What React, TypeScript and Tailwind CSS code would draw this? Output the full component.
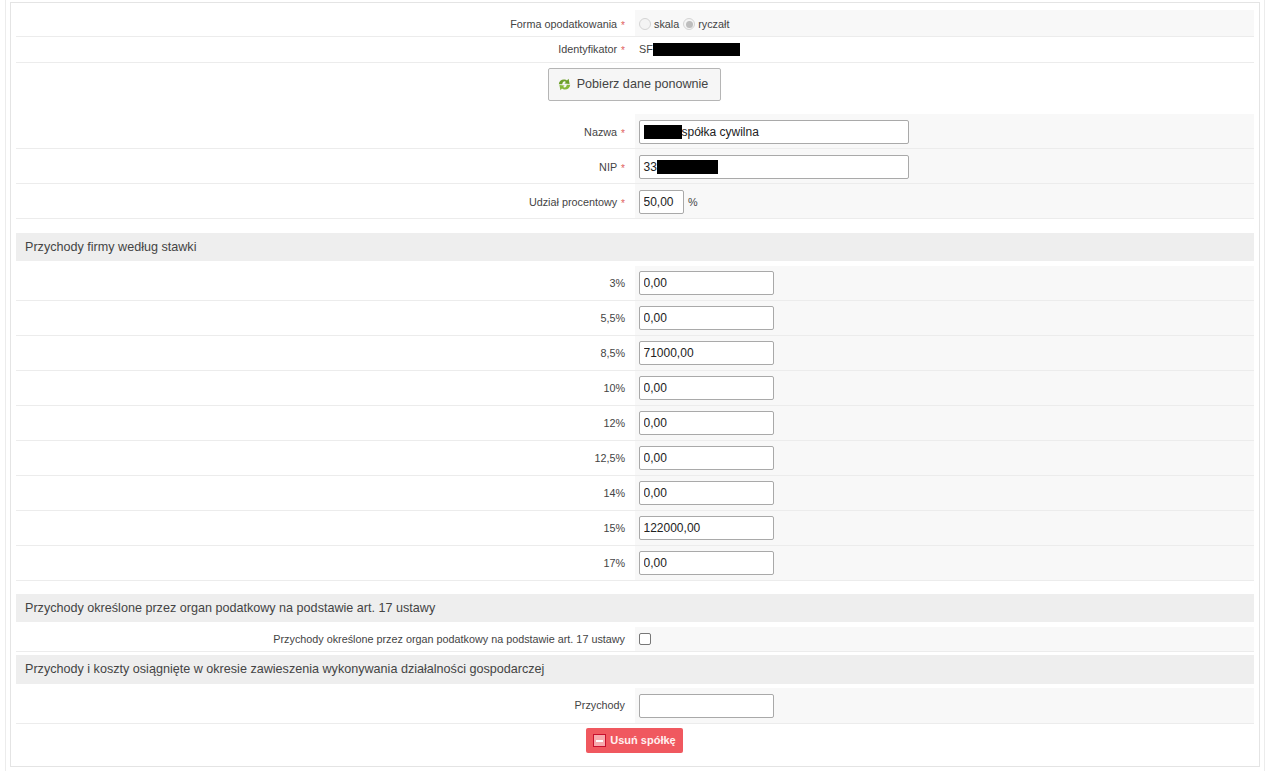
const inputClass =
  'block h-[24px] rounded-[2px] border border-[#a9a9a9] bg-white px-[3.5px] text-[12px] text-[#222] outline-none';

function Star() {
  return <span className="ml-[4px] mt-[2px] text-[10px] text-[#e0605c]">*</span>;
}

function Row({ label, required, height = 'h-[35px]', children }: { label: string; required?: boolean; height?: string; children: React.ReactNode }) {
  return (
    <div className={`flex border-b border-[#ececec] ${height}`}>
      <div className={`flex w-[619px] items-center justify-end pr-[10px] text-[10.8px] text-[#444] ${required ? 'pt-[2px]' : ''}`}>
        {label}
        {required && <Star />}
      </div>
      <div className={`flex flex-1 items-center bg-[#f8f8f8] pl-[4px] ${required ? 'pt-[2px]' : ''}`}>{children}</div>
    </div>
  );
}

function Header({ title, height = 'h-[28px]' }: { title: string; height?: string }) {
  return <div className={`flex items-center bg-[#eeeeee] pl-[9px] text-[12.6px] text-[#444] ${height}`}>{title}</div>;
}

function Radio({ checked }: { checked?: boolean }) {
  return (
    <span className="flex h-[12px] w-[12px] items-center justify-center rounded-full border border-[#d4d4d4] bg-[#f4f4f4]">
      {checked && <span className="h-[7px] w-[7px] rounded-full bg-[#bdbdbd]" />}
    </span>
  );
}

function RefreshIcon() {
  return (
    <svg width="13" height="13" viewBox="0 0 13 13">
      <path d="M.8 6.2C1 3 3.4 1.2 6.4 1.4c1.1.1 1.9.4 2.6 1L10.6.8l1 5.2-5.2-.5 1.5-1.5C7.3 3.4 6.6 3.3 6 3.4 4.9 3.5 4.4 4.7 4.3 6.2Z" fill="#6c9f2a" />
      <path d="M12.2 6.8C12 10 9.6 11.8 6.6 11.6c-1.1-.1-1.9-.4-2.6-1L2.4 12.2l-1-5.2 5.2.5-1.5 1.5c.6.4 1.3.5 1.9.4 1.1-.1 1.6-1.3 1.7-2.6Z" fill="#86b83a" />
    </svg>
  );
}

const rates = [
  ['3%', '0,00'],
  ['5,5%', '0,00'],
  ['8,5%', '71000,00'],
  ['10%', '0,00'],
  ['12%', '0,00'],
  ['12,5%', '0,00'],
  ['14%', '0,00'],
  ['15%', '122000,00'],
  ['17%', '0,00'],
];

export default function App() {
  return (
    <div className="h-[771px] overflow-hidden bg-white pl-[5px] pr-[1px] font-['Liberation_Sans',Arial,sans-serif]">
      <div className="h-full border-x border-[#ececec] pl-[4px] pr-[4px] pt-[2px]">
        <div className="h-[765px] border border-[#e4e4e4] px-[5px] pt-[7px]">
          <div className="flex h-[27px] border-b border-[#ececec]">
            <div className="flex w-[619px] items-center justify-end pt-[2px] pr-[10px] text-[10.8px] text-[#444]">
              Forma opodatkowania
              <Star />
            </div>
            <div className="flex flex-1 items-center gap-[3px] bg-[#f8f8f8] pl-[4px] pt-[2px] text-[10.8px] text-[#444]">
              <Radio />
              <span className="mr-[1px]">skala</span>
              <Radio checked />
              <span>ryczałt</span>
            </div>
          </div>
          <div className="flex h-[26px] border-b border-[#ececec]">
            <div className="flex w-[619px] items-center justify-end pr-[10px] text-[10.8px] text-[#444]">
              Identyfikator
              <Star />
            </div>
            <div className="flex flex-1 items-center pl-[4px] text-[10.8px] text-[#444]">
              SF
              <span className="h-[13px] w-[87px] bg-black" />
            </div>
          </div>

          <div className="flex h-[51px] justify-center pt-[5px] pr-[1px]">
            <button className="flex h-[33px] w-[173px] items-center justify-center gap-[6px] rounded-[2px] border border-[#b5b5b5] bg-[#f6f6f6] pr-[3px] text-[12.6px] text-[#444]">
              <RefreshIcon />
              Pobierz dane ponownie
            </button>
          </div>

          <Row label="Nazwa" required>
            <div className={`${inputClass} flex w-[270px] items-center`}>
              <span className="h-[14px] w-[38px] bg-black" />
              spółka cywilna
            </div>
          </Row>
          <Row label="NIP" required>
            <div className={`${inputClass} flex w-[270px] items-center`}>
              33
              <span className="h-[14px] w-[61px] bg-black" />
            </div>
          </Row>
          <Row label="Udział procentowy" required>
            <input readOnly value="50,00" className={`${inputClass} w-[45px]`} />
            <span className="ml-[4px] text-[10.8px] text-[#444]">%</span>
          </Row>

          <div className="mt-[14px] mb-[5px]">
            <Header title="Przychody firmy według stawki" />
          </div>
          {rates.map(([label, value]) => (
            <Row key={label} label={label}>
              <input readOnly value={value} className={`${inputClass} w-[135px]`} />
            </Row>
          ))}

          <div className="mt-[13px] mb-[5px]">
            <Header title="Przychody określone przez organ podatkowy na podstawie art. 17 ustawy" />
          </div>
          <Row label="Przychody określone przez organ podatkowy na podstawie art. 17 ustawy" height="h-[25px]">
            <span className="h-[12px] w-[12px] rounded-[2px] border border-[#777] bg-white" />
          </Row>

          <div className="mt-[3px] mb-[4px]">
            <Header title="Przychody i koszty osiągnięte w okresie zawieszenia wykonywania działalności gospodarczej" height="h-[29px]" />
          </div>
          <Row label="Przychody" height="h-[36px]">
            <input readOnly value="" className={`${inputClass} mt-[1px] w-[135px]`} />
          </Row>

          <div className="flex justify-center pt-[4px] pr-[1px]">
            <button className="flex h-[25px] w-[97px] items-center justify-center gap-[4px] rounded-[2px] bg-[#f0585f] text-[11px] font-bold text-[#fff0f0]">
              <span className="flex h-[13px] w-[13px] items-center justify-center border border-[#c8102e] bg-[#f7a9ad]">
                <span className="h-[2px] w-[7px] bg-white" />
              </span>
              Usuń spółkę
            </button>
          </div>
        </div>
      </div>
    </div>
  );
}
